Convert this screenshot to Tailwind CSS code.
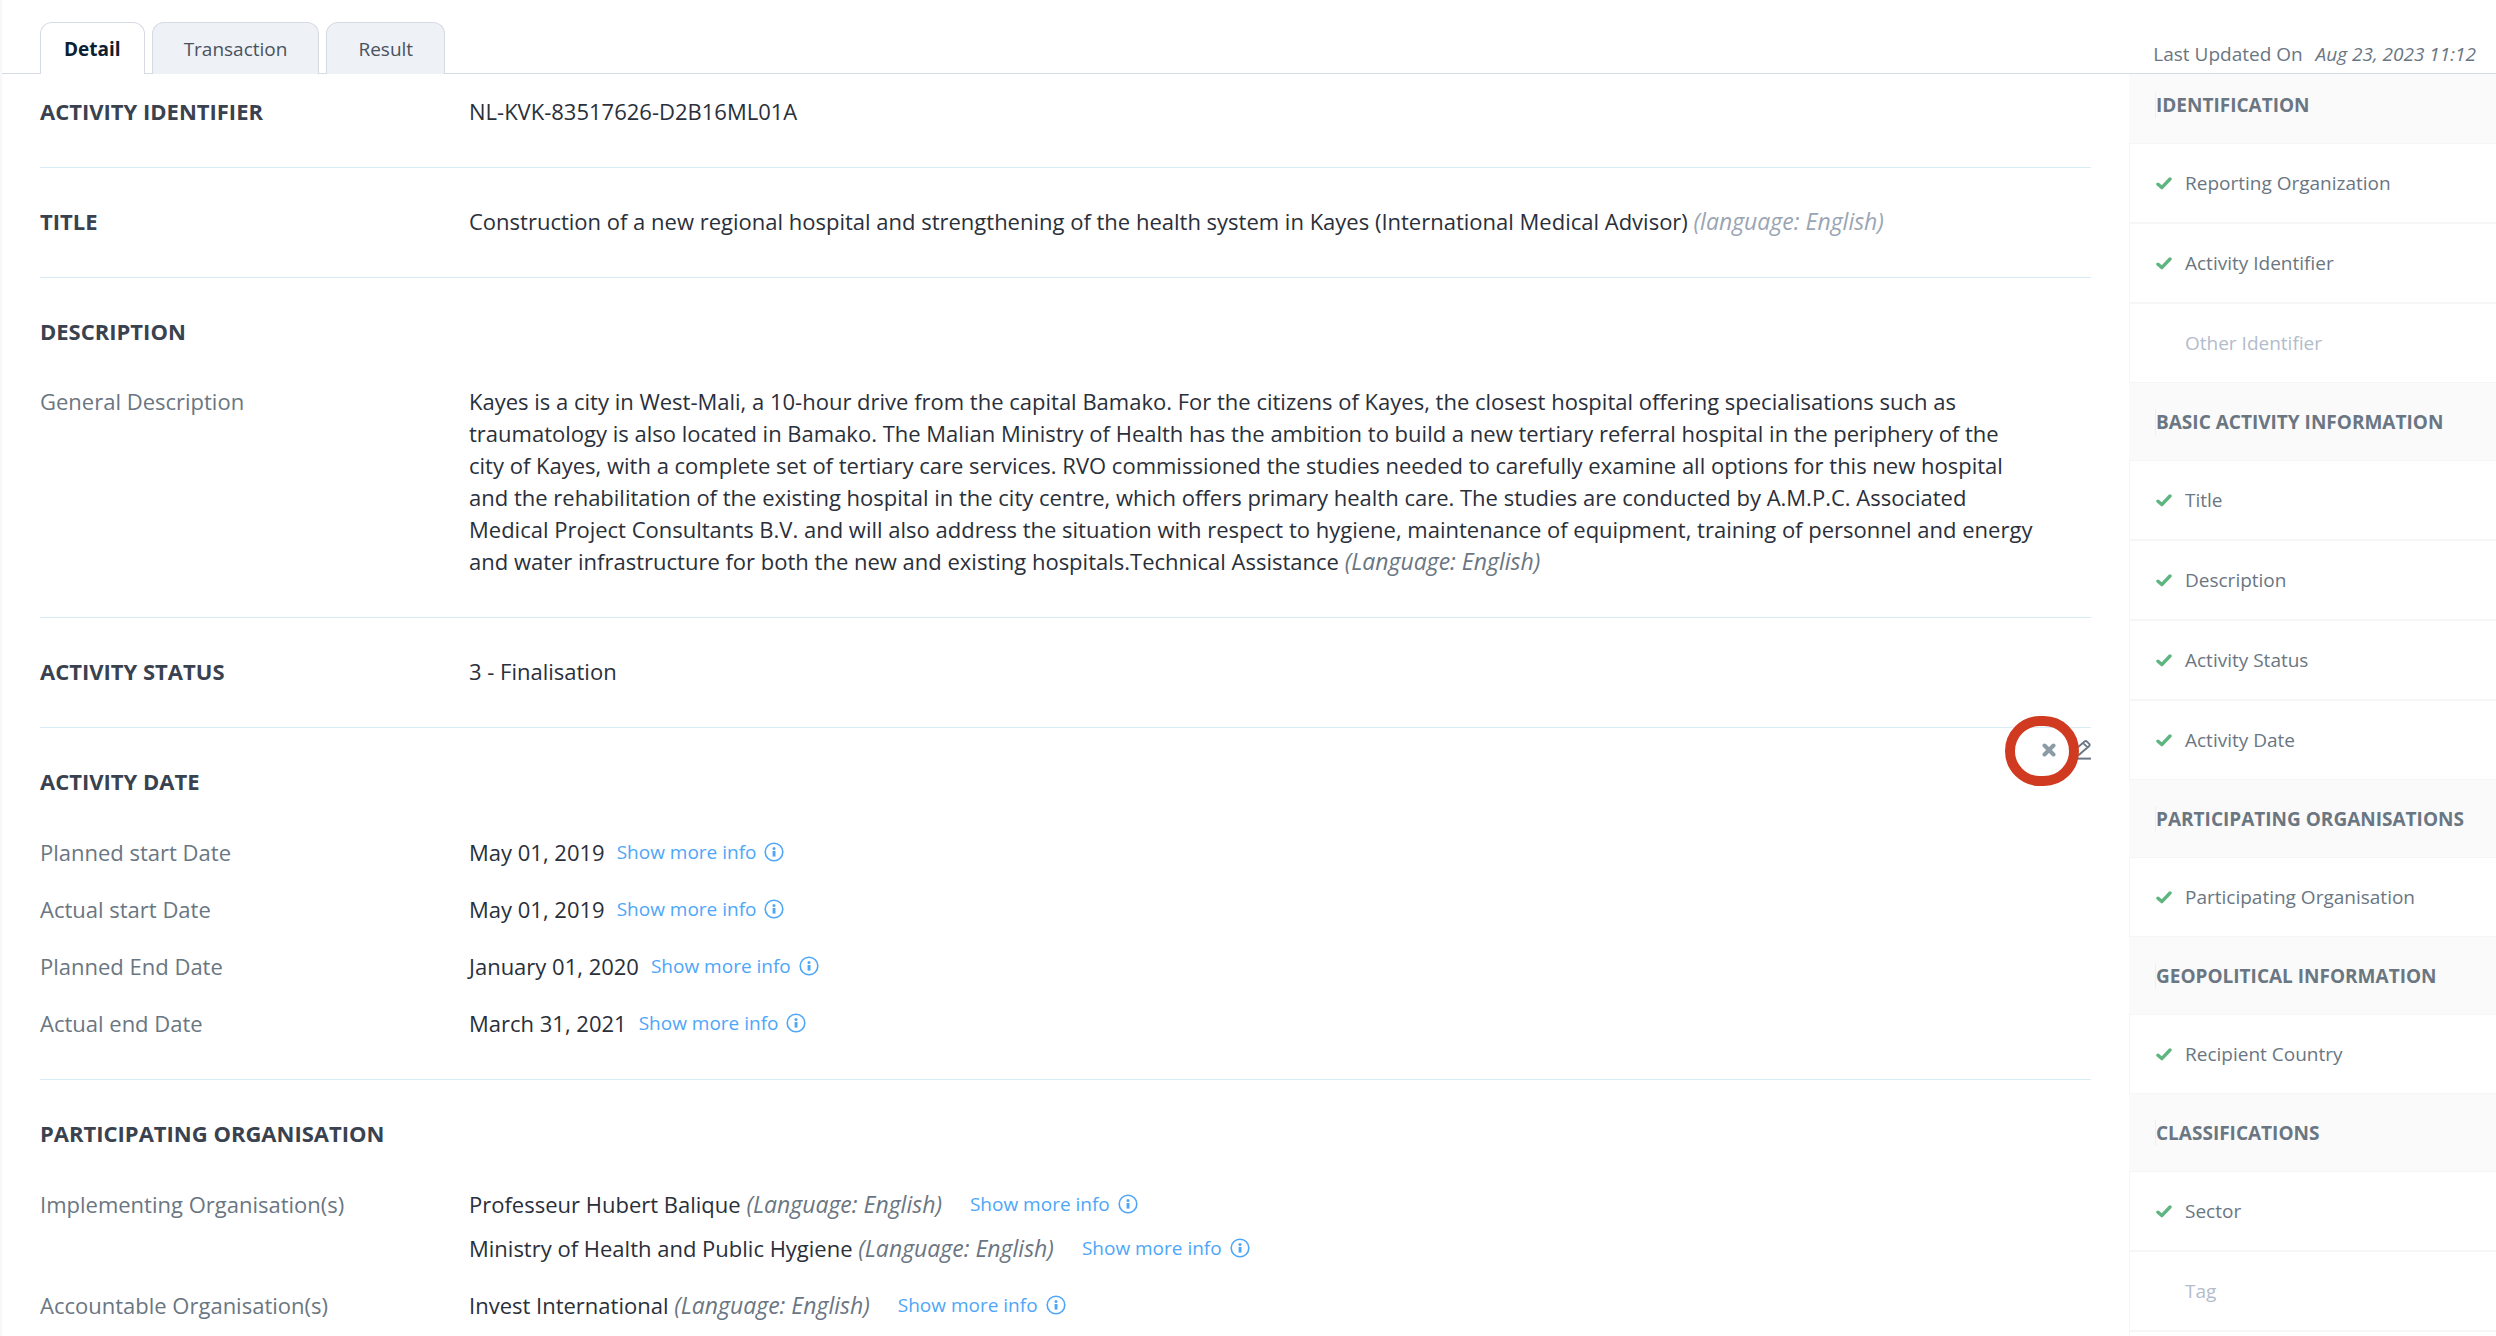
<!DOCTYPE html>
<html lang="en">
<head>
    <meta charset="UTF-8">
    <meta name="viewport" content="width=device-width, initial-scale=1.0">
    <title>Activity Detail</title>
    <script src="https://cdn.jsdelivr.net/npm/@tailwindcss/browser@4"></script>
</head>
<body class="bg-white font-['Open_Sans','Noto_Sans',sans-serif] text-[22px] leading-8 text-[#2a2f3a]">
    <!-- Shared icons -->
    <svg class="hidden">
        <symbol id="check" viewBox="0 0 16 13">
            <path d="M2 7.2 L5.8 10.6 L14 2" fill="none" stroke="#5fb57f" stroke-width="3.4" stroke-linecap="round" stroke-linejoin="round" />
        </symbol>
        <symbol id="info" viewBox="0 0 20 20">
            <circle cx="10" cy="10" r="8.8" fill="none" stroke="#4ea6f8" stroke-width="1.6" />
            <circle cx="10" cy="6.4" r="1.5" fill="#4ea6f8" />
            <rect x="8.6" y="9" width="2.9" height="5.6" fill="#4ea6f8" />
        </symbol>
    </svg>

    <div class="relative flex h-screen flex-col overflow-hidden border-l-2 border-[#f8f8f8]">
        <div class="absolute top-0 -left-0.5 h-[110px] w-0.5 bg-[#e8ebf1]"></div>

        <!-- Tabs -->
        <header class="flex h-[74px] shrink-0 items-end justify-between border-b border-[#d5dae3] pr-5 pl-[38px] text-[19px]">
            <nav class="-mb-px flex gap-[7px]">
                <button class="h-[52px] rounded-t-xl border border-b-0 border-[#d5dae3] bg-white px-[23px] font-bold text-[#0b2030]">Detail</button>
                <button class="h-[52px] rounded-t-xl border border-b-0 border-[#d5dae3] bg-[#eef1f6] px-[31px] text-[#4a5260]">Transaction</button>
                <button class="h-[52px] rounded-t-xl border border-b-0 border-[#d5dae3] bg-[#eef1f6] px-[31px] text-[#4a5260]">Result</button>
            </nav>
            <p class="pb-[3px] text-[#6a7682]">Last Updated On <em class="ml-2">Aug 23, 2023 11:12</em></p>
        </header>

        <div class="flex min-h-0 flex-1">
            <!-- Activity detail -->
            <main class="min-w-0 flex-1 pr-[38px] pl-[38px]">
                <section class="flex pt-[21px] pb-10">
                    <h2 class="w-[429px] shrink-0 font-bold text-[#39424e]">ACTIVITY IDENTIFIER</h2>
                    <p>NL-KVK-83517626-D2B16ML01A</p>
                </section>

                <section class="flex border-t border-[#d8ecf6] pt-[37px] pb-10">
                    <h2 class="w-[429px] shrink-0 font-bold text-[#39424e]">TITLE</h2>
                    <p>Construction of a new regional hospital and strengthening of the health system in Kayes (International Medical Advisor) <em class="text-[23px] leading-none text-[#9aa5b4]">(language: English)</em></p>
                </section>

                <section class="border-t border-[#d8ecf6] pt-[37px] pb-10">
                    <h2 class="mb-[38px] font-bold text-[#39424e]">DESCRIPTION</h2>
                    <div class="flex">
                        <h3 class="w-[429px] shrink-0 text-[#6a7682]">General Description</h3>
                        <p class="pr-13">Kayes is a city in West-Mali, a 10-hour drive from the capital Bamako. For the citizens of Kayes, the closest hospital offering specialisations such as traumatology is also located in Bamako. The Malian Ministry of Health has the ambition to build a new tertiary referral hospital in the periphery of the city of Kayes, with a complete set of tertiary care services. RVO commissioned the studies needed to carefully examine all options for this new hospital and the rehabilitation of the existing hospital in the city centre, which offers primary health care. The studies are conducted by A.M.P.C. Associated Medical Project Consultants B.V. and will also address the situation with respect to hygiene, maintenance of equipment, training of personnel and energy and water infrastructure for both the new and existing hospitals.Technical Assistance <em class="text-[23px] leading-none text-[#6a7682]">(Language: English)</em></p>
                    </div>
                </section>

                <section class="flex border-t border-[#d8ecf6] pt-[37px] pb-10">
                    <h2 class="w-[429px] shrink-0 font-bold text-[#39424e]">ACTIVITY STATUS</h2>
                    <p>3 - Finalisation</p>
                </section>

                <section class="relative border-t border-[#d8ecf6] pt-[37px] pb-10">
                    <!-- Row actions -->
                    <div class="absolute top-3 right-0 flex items-center gap-[19px]">
                        <button aria-label="Delete">
                            <svg class="h-[14px] w-[14px]" viewBox="0 0 14 14"><path d="M2.5 2.5 L11.5 11.5 M11.5 2.5 L2.5 11.5" fill="none" stroke="#8b9ba5" stroke-width="4" stroke-linecap="round" /></svg>
                        </button>
                        <button aria-label="Edit">
                            <svg class="h-5 w-4" viewBox="0 0 16 20">
                                <path d="M-1 13.5 L0 9.8 L9.8 1.2 Q11 0.6 12.2 1.8 L14.4 4 Q15.2 5 14.2 6 L4 14.8 L0 15.6 M8.6 3.6 L12.4 7.2" fill="none" stroke="#6a7682" stroke-width="1.8" />
                                <rect x="-2" y="17.6" width="18" height="2" fill="#6a7682" />
                            </svg>
                        </button>
                    </div>
                    <div class="pointer-events-none absolute -top-3 right-3 h-[70px] w-[74px] rounded-full border-10 border-[#d03a20]"></div>

                    <h2 class="mb-[39px] font-bold text-[#39424e]">ACTIVITY DATE</h2>
                    <div class="flex flex-col gap-[25px]">
                        <div class="flex">
                            <h3 class="w-[429px] shrink-0 text-[#6a7682]">Planned start Date</h3>
                            <p>May 01, 2019</p>
                            <button class="ml-3 flex items-center gap-2 text-[19px] text-[#4ea6f8]">Show more info <svg class="size-5"><use href="#info" /></svg></button>
                        </div>
                        <div class="flex">
                            <h3 class="w-[429px] shrink-0 text-[#6a7682]">Actual start Date</h3>
                            <p>May 01, 2019</p>
                            <button class="ml-3 flex items-center gap-2 text-[19px] text-[#4ea6f8]">Show more info <svg class="size-5"><use href="#info" /></svg></button>
                        </div>
                        <div class="flex">
                            <h3 class="w-[429px] shrink-0 text-[#6a7682]">Planned End Date</h3>
                            <p>January 01, 2020</p>
                            <button class="ml-3 flex items-center gap-2 text-[19px] text-[#4ea6f8]">Show more info <svg class="size-5"><use href="#info" /></svg></button>
                        </div>
                        <div class="flex">
                            <h3 class="w-[429px] shrink-0 text-[#6a7682]">Actual end Date</h3>
                            <p>March 31, 2021</p>
                            <button class="ml-3 flex items-center gap-2 text-[19px] text-[#4ea6f8]">Show more info <svg class="size-5"><use href="#info" /></svg></button>
                        </div>
                    </div>
                </section>

                <section class="border-t border-[#d8ecf6] pt-[37px] pb-10">
                    <h2 class="mb-[39px] font-bold text-[#39424e]">PARTICIPATING ORGANISATION</h2>
                    <div class="flex flex-col gap-[25px]">
                        <div class="flex">
                            <h3 class="w-[429px] shrink-0 text-[#6a7682]">Implementing Organisation(s)</h3>
                            <div class="flex flex-col gap-3">
                                <div class="flex">
                                    <p>Professeur Hubert Balique <em class="text-[23px] leading-none text-[#6a7682]">(Language: English)</em></p>
                                    <button class="ml-7 flex items-center gap-2 text-[19px] text-[#4ea6f8]">Show more info <svg class="size-5"><use href="#info" /></svg></button>
                                </div>
                                <div class="flex">
                                    <p>Ministry of Health and Public Hygiene <em class="text-[23px] leading-none text-[#6a7682]">(Language: English)</em></p>
                                    <button class="ml-7 flex items-center gap-2 text-[19px] text-[#4ea6f8]">Show more info <svg class="size-5"><use href="#info" /></svg></button>
                                </div>
                            </div>
                        </div>
                        <div class="flex">
                            <h3 class="w-[429px] shrink-0 text-[#6a7682]">Accountable Organisation(s)</h3>
                            <p>Invest International <em class="text-[23px] leading-none text-[#6a7682]">(Language: English)</em></p>
                            <button class="ml-7 flex items-center gap-2 text-[19px] text-[#4ea6f8]">Show more info <svg class="size-5"><use href="#info" /></svg></button>
                        </div>
                    </div>
                </section>
            </main>

            <!-- Element list -->
            <aside class="w-[367px] shrink-0 overflow-hidden bg-[#fafafa] text-[19px] text-[#6a7682]">
                <h4 class="-mt-2 flex h-[77px] items-center pl-[26px] font-bold"><span class="border-l border-[#eeeff6] leading-[26px]">IDENTIFICATION</span></h4>
                <ul>
                    <li class="flex h-20 items-center gap-[13px] border border-r-0 border-[#f6f6f6] bg-white pl-[26px]"><svg class="h-[13px] w-4"><use href="#check" /></svg><a href="#">Reporting Organization</a></li>
                    <li class="flex h-20 items-center gap-[13px] border border-r-0 border-[#f6f6f6] bg-white pl-[26px]"><svg class="h-[13px] w-4"><use href="#check" /></svg><a href="#">Activity Identifier</a></li>
                    <li class="flex h-20 items-center border border-r-0 border-[#f6f6f6] bg-white pl-[55px] text-[#b3bccb]"><a href="#">Other Identifier</a></li>
                </ul>
                <h4 class="flex h-[77px] items-center pl-[26px] font-bold"><span class="border-l border-[#eeeff6] leading-[26px]">BASIC ACTIVITY INFORMATION</span></h4>
                <ul>
                    <li class="flex h-20 items-center gap-[13px] border border-r-0 border-[#f6f6f6] bg-white pl-[26px]"><svg class="h-[13px] w-4"><use href="#check" /></svg><a href="#">Title</a></li>
                    <li class="flex h-20 items-center gap-[13px] border border-r-0 border-[#f6f6f6] bg-white pl-[26px]"><svg class="h-[13px] w-4"><use href="#check" /></svg><a href="#">Description</a></li>
                    <li class="flex h-20 items-center gap-[13px] border border-r-0 border-[#f6f6f6] bg-white pl-[26px]"><svg class="h-[13px] w-4"><use href="#check" /></svg><a href="#">Activity Status</a></li>
                    <li class="flex h-20 items-center gap-[13px] border border-r-0 border-[#f6f6f6] bg-white pl-[26px]"><svg class="h-[13px] w-4"><use href="#check" /></svg><a href="#">Activity Date</a></li>
                </ul>
                <h4 class="flex h-[77px] items-center pl-[26px] font-bold"><span class="border-l border-[#eeeff6] leading-[26px]">PARTICIPATING ORGANISATIONS</span></h4>
                <ul>
                    <li class="flex h-20 items-center gap-[13px] border border-r-0 border-[#f6f6f6] bg-white pl-[26px]"><svg class="h-[13px] w-4"><use href="#check" /></svg><a href="#">Participating Organisation</a></li>
                </ul>
                <h4 class="flex h-[77px] items-center pl-[26px] font-bold"><span class="border-l border-[#eeeff6] leading-[26px]">GEOPOLITICAL INFORMATION</span></h4>
                <ul>
                    <li class="flex h-20 items-center gap-[13px] border border-r-0 border-[#f6f6f6] bg-white pl-[26px]"><svg class="h-[13px] w-4"><use href="#check" /></svg><a href="#">Recipient Country</a></li>
                </ul>
                <h4 class="flex h-[77px] items-center pl-[26px] font-bold"><span class="border-l border-[#eeeff6] leading-[26px]">CLASSIFICATIONS</span></h4>
                <ul>
                    <li class="flex h-20 items-center gap-[13px] border border-r-0 border-[#f6f6f6] bg-white pl-[26px]"><svg class="h-[13px] w-4"><use href="#check" /></svg><a href="#">Sector</a></li>
                    <li class="flex h-20 items-center border border-r-0 border-[#f6f6f6] bg-white pl-[55px] text-[#b3bccb]"><a href="#">Tag</a></li>
                    <li class="h-20 border border-r-0 border-[#f6f6f6] bg-white"></li>
                </ul>
            </aside>
        </div>
    </div>
</body>
</html>
